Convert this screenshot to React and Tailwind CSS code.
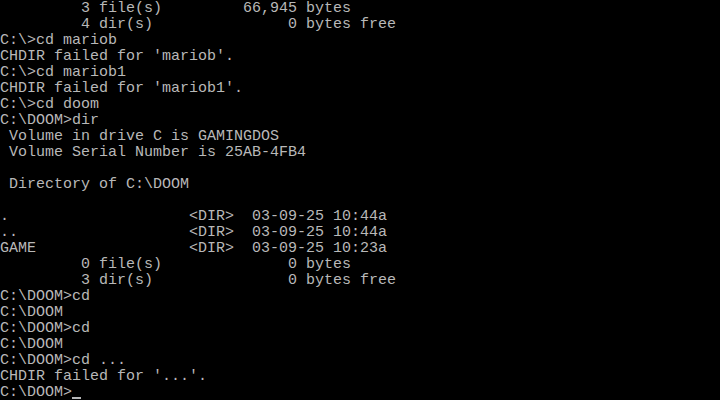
// DOS text-mode console, 80x25 cells of 9x16 px
const lines = [
  '         3 file(s)         66,945 bytes',
  '         4 dir(s)               0 bytes free',
  'C:\\>cd mariob',
  "CHDIR failed for 'mariob'.",
  'C:\\>cd mariob1',
  "CHDIR failed for 'mariob1'.",
  'C:\\>cd doom',
  'C:\\DOOM>dir',
  ' Volume in drive C is GAMINGDOS',
  ' Volume Serial Number is 25AB-4FB4',
  '',
  ' Directory of C:\\DOOM',
  '',
  '.                    <DIR>  03-09-25 10:44a',
  '..                   <DIR>  03-09-25 10:44a',
  'GAME                 <DIR>  03-09-25 10:23a',
  '         0 file(s)              0 bytes',
  '         3 dir(s)               0 bytes free',
  'C:\\DOOM>cd',
  'C:\\DOOM',
  'C:\\DOOM>cd',
  'C:\\DOOM',
  'C:\\DOOM>cd ...',
  "CHDIR failed for '...'.",
];

export default function App() {
  return (
    <div className="w-[720px] h-[400px] bg-black overflow-hidden pt-px text-[#b8b8b8] font-['Liberation_Mono',monospace] text-[15px] leading-[16px]">
      {lines.map((line, i) => (
        <div key={i} className="h-4 whitespace-pre">
          {line}
        </div>
      ))}
      <div className="h-4 whitespace-pre flex">
        <span>C:\DOOM&gt;</span>
        <span className="relative w-[9px] h-4">
          <span className="absolute left-0 bottom-[2px] w-[9px] h-[2px] bg-[#b8b8b8]" />
        </span>
      </div>
    </div>
  );
}
